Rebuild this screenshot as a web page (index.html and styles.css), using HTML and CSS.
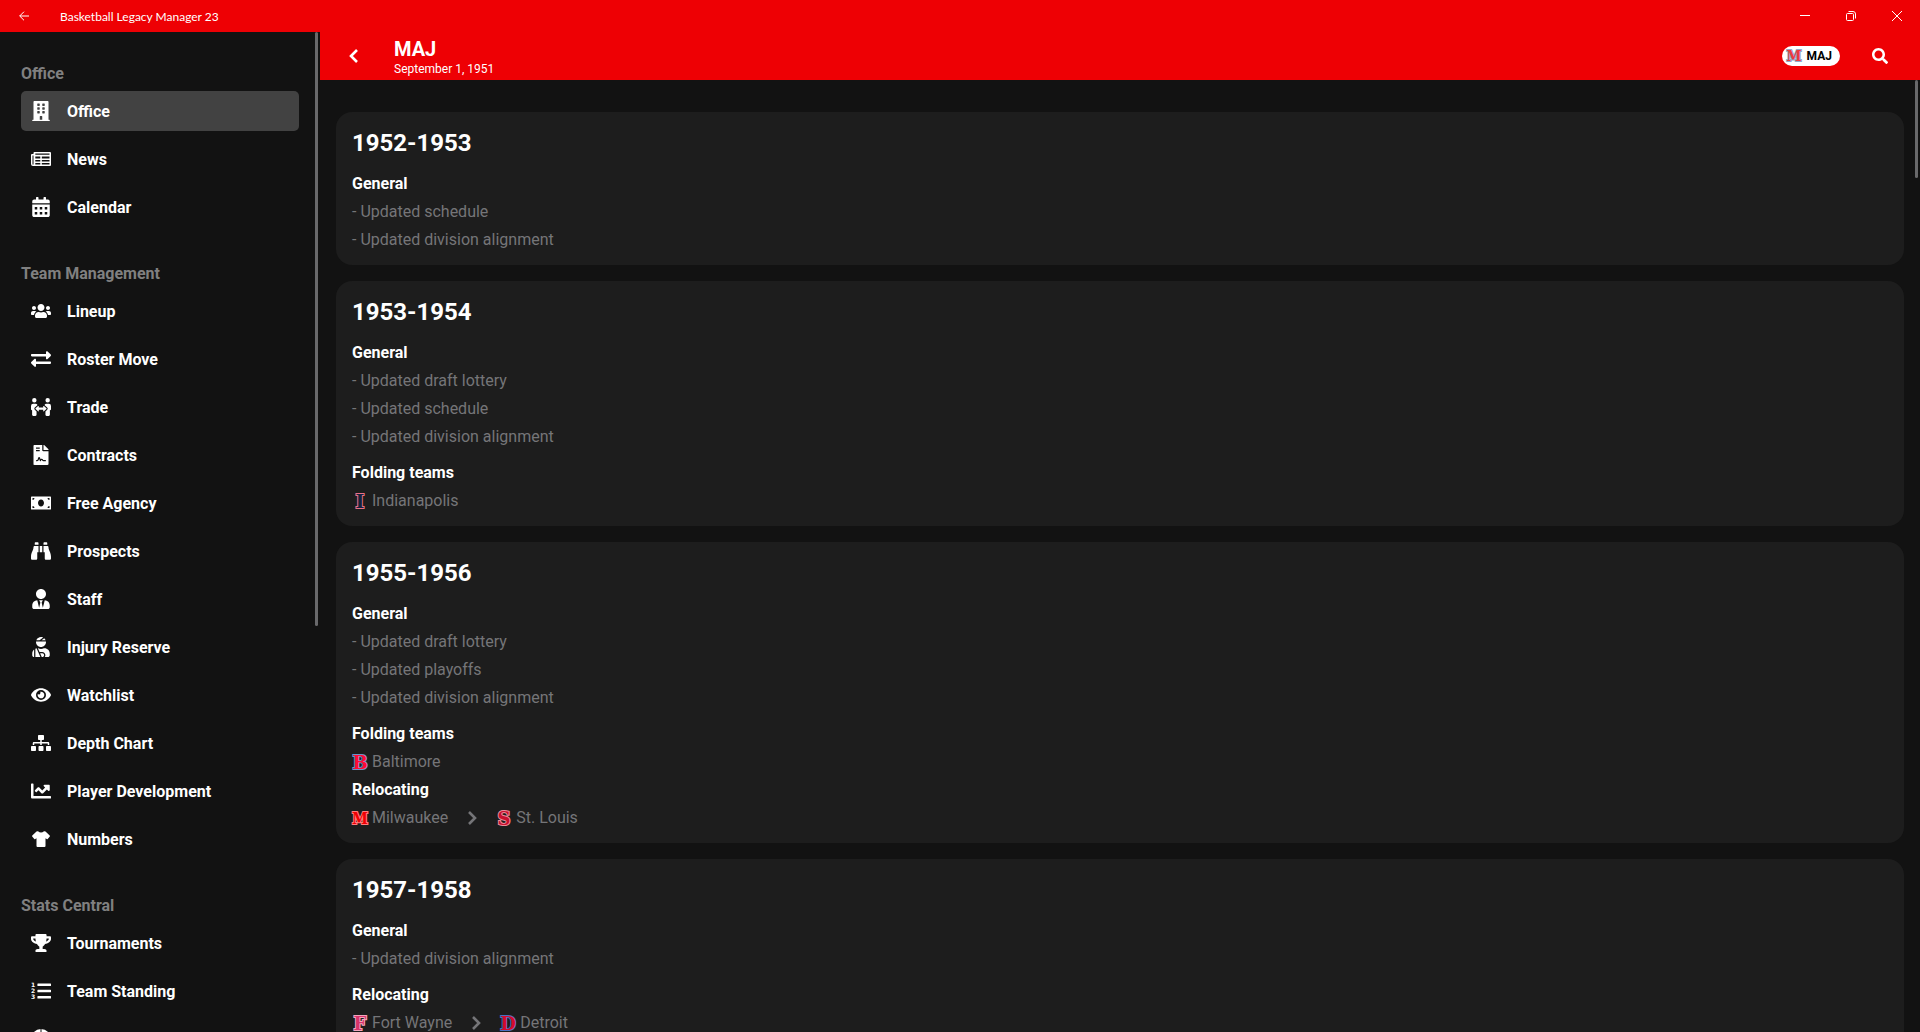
FILE: index.html
```html
<!DOCTYPE html>
<html lang="en">
<head>
    <meta charset="UTF-8">
    <meta name="viewport" content="width=device-width, initial-scale=1.0">
    <title>Basketball Legacy Manager 23</title>
    <link rel="stylesheet" href="styles.css">
</head>
<body>
    <div class="titlebar">
        <button class="titlebar-back" aria-label="Back">
            <svg width="10" height="10" viewBox="0 0 10 10"><path d="M10 5H.7M5 .7.7 5 5 9.300"/></svg>
        </button>
        <span class="titlebar-name">Basketball Legacy Manager 23</span>
        <button class="window-button" aria-label="Minimize">
            <svg width="10" height="10" viewBox="0 0 10 10"><path d="M0 4.500h10"/></svg>
        </button>
        <button class="window-button" aria-label="Restore">
            <svg width="10" height="10" viewBox="0 0 10 10"><path d="M1.500 2.500h5a1 1 0 0 1 1 1v5a1 1 0 0 1-1 1h-5a1 1 0 0 1-1-1v-5a1 1 0 0 1 1-1zM2.500.5H7A2.500 2.500 0 0 1 9.500 3v4.500"/></svg>
        </button>
        <button class="window-button" aria-label="Close">
            <svg width="10" height="10" viewBox="0 0 10 10"><path d="M0 0l10 10M10 0 0 10"/></svg>
        </button>
    </div>
    <div class="app">
        <div class="sidebar">
            <nav class="menu">
                <section>
                    <h2>Office</h2>
                    <a class="active" href="#office">
                        <svg viewBox="0 0 448 512"><path d="M436 480h-20V24c0-13.255-10.745-24-24-24H56C42.745 0 32 10.745 32 24v456H12c-6.627 0-12 5.373-12 12v20h448v-20c0-6.627-5.373-12-12-12zM128 76c0-6.627 5.373-12 12-12h40c6.627 0 12 5.373 12 12v40c0 6.627-5.373 12-12 12h-40c-6.627 0-12-5.373-12-12V76zm0 96c0-6.627 5.373-12 12-12h40c6.627 0 12 5.373 12 12v40c0 6.627-5.373 12-12 12h-40c-6.627 0-12-5.373-12-12v-40zm52 148h-40c-6.627 0-12-5.373-12-12v-40c0-6.627 5.373-12 12-12h40c6.627 0 12 5.373 12 12v40c0 6.627-5.373 12-12 12zm76 160h-64v-84c0-6.627 5.373-12 12-12h40c6.627 0 12 5.373 12 12v84zm64-172c0 6.627-5.373 12-12 12h-40c-6.627 0-12-5.373-12-12v-40c0-6.627 5.373-12 12-12h40c6.627 0 12 5.373 12 12v40zm0-96c0 6.627-5.373 12-12 12h-40c-6.627 0-12-5.373-12-12v-40c0-6.627 5.373-12 12-12h40c6.627 0 12 5.373 12 12v40zm0-96c0 6.627-5.373 12-12 12h-40c-6.627 0-12-5.373-12-12V76c0-6.627 5.373-12 12-12h40c6.627 0 12 5.373 12 12v40z"/></svg>
                        Office
                    </a>
                    <a href="#news">
                        <svg viewBox="0 0 20 20"><path fill-rule="evenodd" d="M3.500 3h15.500q1 0 1 1v12q0 1-1 1H2q-2 0-2-2V6q0-1 1-1h1.500V4q0-1 1-1zM1.500 6.500V15q0 .7.500.7t.5-.7V6.500zM4.300 4.600v1.200h14.200V4.600zM4.300 7.600v1.800h5V7.600zM10.800 7.600v1.800h7.700V7.600zM4.300 11v1.400h5V11zM10.800 11v1.400h7.700V11zM4.300 14v1.400h5V14zM10.800 14v1.400h7.700V14z"/></svg>
                        News
                    </a>
                    <a href="#calendar">
                        <svg viewBox="0 0 448 512"><path fill-rule="evenodd" d="M0 464c0 26.500 21.500 48 48 48h352c26.500 0 48-21.500 48-48V192H0v272zM64 256h64v64H64zm128 0h64v64h-64zm128 0h64v64h-64zM64 384h64v64H64zm128 0h64v64h-64zm128 0h64v64h-64zM400 64h-48V16c0-8.800-7.200-16-16-16h-32c-8.800 0-16 7.200-16 16v48H160V16c0-8.800-7.200-16-16-16h-32c-8.800 0-16 7.200-16 16v48H48C21.500 64 0 85.500 0 112v48h448v-48c0-26.500-21.500-48-48-48z"/></svg>
                        Calendar
                    </a>
                </section>
                <section>
                    <h2>Team Management</h2>
                    <a href="#lineup">
                        <svg viewBox="0 0 640 512"><path d="M96 224c35.300 0 64-28.700 64-64s-28.700-64-64-64-64 28.700-64 64 28.700 64 64 64zm448 0c35.300 0 64-28.700 64-64s-28.700-64-64-64-64 28.700-64 64 28.700 64 64 64zm32 32h-64c-17.600 0-33.500 7.100-45.100 18.600 40.300 22.100 68.900 62 75.100 109.400h66c17.700 0 32-14.300 32-32v-32c0-35.300-28.700-64-64-64zm-256 0c61.900 0 112-50.100 112-112S381.900 32 320 32 208 82.100 208 144s50.100 112 112 112zm76.800 32h-8.300c-20.800 10-43.900 16-68.500 16s-47.600-6-68.500-16h-8.300C179.600 288 128 339.600 128 403.200V432c0 26.500 21.500 48 48 48h288c26.500 0 48-21.500 48-48v-28.800c0-63.600-51.600-115.200-115.200-115.200zm-223.700-13.400C161.500 263.100 145.600 256 128 256H64c-35.300 0-64 28.700-64 64v32c0 17.700 14.300 32 32 32h65.900c6.300-47.400 34.900-87.300 75.200-109.400z"/></svg>
                        Lineup
                    </a>
                    <a href="#roster-move">
                        <svg viewBox="0 0 512 512"><path d="M0 168v-16c0-13.255 10.745-24 24-24h360V80c0-21.367 25.899-32.042 40.971-16.971l80 80c9.372 9.373 9.372 24.569 0 33.941l-80 80C409.956 271.982 384 261.456 384 240v-48H24c-13.255 0-24-10.745-24-24zm488 152H128v-48c0-21.314-25.862-32.080-40.971-16.971l-80 80c-9.372 9.373-9.372 24.569 0 33.941l80 80C102.057 463.997 128 453.437 128 432v-48h360c13.255 0 24-10.745 24-24v-16c0-13.255-10.745-24-24-24z"/></svg>
                        Roster Move
                    </a>
                    <a href="#trade">
                        <svg viewBox="0 0 576 512"><path d="M96,128A64,64,0,1,0,32,64,64,64,0,0,0,96,128Zm0,176.080a44.110,44.110,0,0,1,13.640-32L181.770,204c1.650-1.550,3.770-2.310,5.610-3.570A63.910,63.910,0,0,0,128,160H64A64,64,0,0,0,0,224v96a32,32,0,0,0,32,32V480a32,32,0,0,0,32,32h64a32,32,0,0,0,32-32V383.610l-50.360-47.530A44.080,44.080,0,0,1,96,304.080ZM480,128a64,64,0,1,0-64-64A64,64,0,0,0,480,128Zm32,32H448a63.910,63.910,0,0,0-59.380,40.420c1.840,1.270,4,2,5.620,3.590l72.120,68.060a44.370,44.370,0,0,1,0,64L416,383.620V480a32,32,0,0,0,32,32h64a32,32,0,0,0,32-32V352a32,32,0,0,0,32-32V224A64,64,0,0,0,512,160ZM444.400,295.340l-72.120-68.060A12,12,0,0,0,352,236v36H224V236a12,12,0,0,0-20.280-8.730L131.600,295.340a12.400,12.400,0,0,0,0,17.470l72.120,68.070A12,12,0,0,0,224,372.140V336H352v36.140a12,12,0,0,0,20.280,8.740l72.120-68.070A12.400,12.400,0,0,0,444.400,295.340Z"/></svg>
                        Trade
                    </a>
                    <a href="#contracts">
                        <svg viewBox="0 0 384 512"><path d="M224 136V0H24C10.700 0 0 10.700 0 24v464c0 13.300 10.700 24 24 24h336c13.300 0 24-10.700 24-24V160H248c-13.200 0-24-10.800-24-24zM64 72c0-4.420 3.580-8 8-8h80c4.420 0 8 3.580 8 8v16c0 4.420-3.580 8-8 8H72c-4.420 0-8-3.580-8-8V72zm0 64c0-4.420 3.580-8 8-8h80c4.420 0 8 3.580 8 8v16c0 4.420-3.580 8-8 8H72c-4.420 0-8-3.580-8-8v-16zm192.810 248H304c8.840 0 16 7.160 16 16s-7.160 16-16 16h-47.190c-16.450 0-31.270-9.140-38.640-23.860-2.950-5.920-8.090-6.520-10.170-6.520s-7.220.59-10.020 6.190l-7.670 15.340a15.986 15.986 0 0 1-14.310 8.840c-.38 0-.75-.02-1.140-.05-6.450-.45-12-4.750-14.030-10.890L144 354.590l-10.610 31.880c-5.890 17.660-22.380 29.530-41 29.530H80c-8.840 0-16-7.160-16-16s7.160-16 16-16h12.390c4.830 0 9.110-3.080 10.640-7.660l18.190-54.640c3.300-9.810 12.440-16.410 22.780-16.410s19.480 6.590 22.770 16.410l13.880 41.640c19.770-16.190 54.050-9.700 66 14.160 2.020 4.060 5.960 6.500 10.160 6.500zM377 105L279.100 7c-4.500-4.500-10.600-7-17-7H256v128h128v-6.100c0-6.300-2.500-12.400-7-16.900z"/></svg>
                        Contracts
                    </a>
                    <a href="#free-agency">
                        <svg viewBox="0 0 640 512"><path fill-rule="evenodd" d="M20 48h600a20 20 0 0 1 20 20v376a20 20 0 0 1-20 20H20a20 20 0 0 1-20-20V68a20 20 0 0 1 20-20zM48 96v64a64 64 0 0 0 64-64zM528 96a64 64 0 0 0 64 64V96zM48 352v64h64a64 64 0 0 0-64-64zM592 352a64 64 0 0 0-64 64h64zM320 144c-53 0-96 50-96 112s43 112 96 112 96-50 96-112-43-112-96-112z"/></svg>
                        Free Agency
                    </a>
                    <a href="#prospects">
                        <svg viewBox="0 0 512 512"><path d="M416 48c0-8.840-7.160-16-16-16h-64c-8.840 0-16 7.160-16 16v48h96V48zM63.910 159.990C61.400 253.840 3.460 274.220 0 404v44c0 17.670 14.330 32 32 32h96c17.670 0 32-14.330 32-32V288h32V128H95.840c-17.630 0-31.450 14.370-31.930 31.990zm384.180 0c-.48-17.620-14.300-31.990-31.930-31.990H320v160h32v160c0 17.670 14.330 32 32 32h96c17.670 0 32-14.330 32-32v-44c-3.460-129.780-61.400-150.160-63.910-244.010zM176 32h-64c-8.840 0-16 7.160-16 16v48h96V48c0-8.840-7.160-16-16-16zm48 256h64V128h-64v160z"/></svg>
                        Prospects
                    </a>
                    <a href="#staff">
                        <svg viewBox="0 0 448 512"><path d="M224 256c70.700 0 128-57.300 128-128S294.700 0 224 0 96 57.300 96 128s57.300 128 128 128zm95.800 32.600L272 480l-32-136 32-56h-96l32 56-32 136-47.800-191.400C56.900 292 0 350.300 0 422.400V464c0 26.500 21.500 48 48 48h352c26.500 0 48-21.500 48-48v-41.600c0-72.100-56.900-130.400-128.200-133.800z"/></svg>
                        Staff
                    </a>
                    <a href="#injury-reserve">
                        <svg viewBox="0 0 448 512"><path d="M277.370 11.980C261.080 4.470 243.110 0 224 0c-53.690 0-99.500 33.130-118.510 80h81.190l90.690-68.020zM342.510 80c-7.900-19.470-20.670-36.200-36.490-49.520L239.990 80h102.520zM224 256c70.690 0 128-57.310 128-128 0-5.480-.95-10.700-1.610-16H97.610c-.67 5.300-1.610 10.520-1.610 16 0 70.690 57.310 128 128 128zM80 299.700V512h128.260l-98.450-221.520A132.835 132.835 0 0 0 80 299.700zM0 464c0 26.510 21.490 48 48 48V320.240C18.880 344.890 0 381.260 0 422.400V464zm256-48h-55.380l42.670 96H256c26.470 0 48-21.530 48-48s-21.530-48-48-48zm57.600-128h-16.710c-22.240 10.180-46.880 16-72.890 16s-50.650-5.820-72.890-16h-7.370l42.670 96H256c44.110 0 80 35.890 80 80 0 18.080-6.260 34.590-16.410 48H400c26.510 0 48-21.490 48-48v-41.600c0-74.230-60.170-134.400-134.400-134.400z"/></svg>
                        Injury Reserve
                    </a>
                    <a href="#watchlist">
                        <svg viewBox="0 0 576 512"><path d="M572.520 241.400C518.290 135.590 410.930 64 288 64S57.680 135.640 3.480 241.410a32.350 32.350 0 0 0 0 29.190C57.710 376.410 165.070 448 288 448s230.320-71.640 284.520-177.410a32.350 32.350 0 0 0 0-29.190zM288 400a144 144 0 1 1 144-144 143.930 143.930 0 0 1-144 144zm0-240a95.310 95.310 0 0 0-25.310 3.790 47.850 47.850 0 0 1-66.900 66.900A95.780 95.780 0 1 0 288 160z"/></svg>
                        Watchlist
                    </a>
                    <a href="#depth-chart">
                        <svg viewBox="0 0 640 512"><path d="M128 352H32c-17.670 0-32 14.330-32 32v96c0 17.670 14.330 32 32 32h96c17.670 0 32-14.330 32-32v-96c0-17.670-14.330-32-32-32zm-24-80h192v48h48v-48h192v48h48v-57.590c0-21.170-17.230-38.410-38.410-38.410H344v-64h40c17.670 0 32-14.330 32-32V32c0-17.670-14.330-32-32-32H256c-17.670 0-32 14.330-32 32v96c0 17.670 14.330 32 32 32h40v64H94.410C73.230 224 56 241.230 56 262.410V320h48v-48zm264 80h-96c-17.670 0-32 14.330-32 32v96c0 17.670 14.330 32 32 32h96c17.670 0 32-14.330 32-32v-96c0-17.670-14.330-32-32-32zm240 0h-96c-17.670 0-32 14.330-32 32v96c0 17.670 14.330 32 32 32h96c17.670 0 32-14.330 32-32v-96c0-17.670-14.330-32-32-32z"/></svg>
                        Depth Chart
                    </a>
                    <a href="#player-development">
                        <svg viewBox="0 0 512 512"><path d="M496 384H64V80c0-8.840-7.160-16-16-16H16C7.160 64 0 71.160 0 80v336c0 17.670 14.330 32 32 32h464c8.840 0 16-7.160 16-16v-32c0-8.840-7.160-16-16-16zM464 96H345.940c-21.380 0-32.090 25.850-16.970 40.970l32.400 32.400L288 242.750l-73.370-73.370c-12.500-12.500-32.760-12.500-45.250 0l-68.690 68.690c-6.250 6.250-6.250 16.380 0 22.630l22.620 22.620c6.250 6.250 16.380 6.250 22.630 0L192 237.250l73.370 73.370c12.500 12.500 32.760 12.500 45.250 0l96-96 32.400 32.400c15.120 15.120 40.970 4.410 40.970-16.970V112c.01-8.840-7.150-16-15.990-16z"/></svg>
                        Player Development
                    </a>
                    <a href="#numbers">
                        <svg viewBox="0 0 20 20"><path d="M7 2.300q3 2.400 6 0 .8-.3 1.500.3L18.700 6.500q.5.500.1 1.100L16.700 10q-.5.500-1 .1l-1.200-.8V17q0 1-1 1h-7q-1 0-1-1V9.300l-1.200.8q-.5.400-1-.1L1.200 7.600q-.4-.6.100-1.100L5.500 2.600q.7-.6 1.500-.3z"/></svg>
                        Numbers
                    </a>
                </section>
                <section>
                    <h2>Stats Central</h2>
                    <a href="#tournaments">
                        <svg viewBox="0 0 576 512"><path d="M552 64H448V24c0-13.300-10.700-24-24-24H152c-13.300 0-24 10.700-24 24v40H24C10.700 64 0 74.700 0 88v56c0 35.700 22.500 72.400 61.900 100.700 31.500 22.700 69.800 37.100 110 41.700C203.300 338.500 240 360 240 360v72h-48c-35.300 0-64 20.700-64 56v12c0 6.600 5.400 12 12 12h296c6.600 0 12-5.400 12-12v-12c0-35.300-28.700-56-64-56h-48v-72s36.700-21.500 68.100-73.600c40.300-4.600 78.600-19 110-41.700 39.300-28.300 61.900-65 61.900-100.700V88c0-13.300-10.700-24-24-24zM99.300 192.800C74.900 175.200 64 155.600 64 144v-16h64.200c1 32.600 5.800 61.200 12.800 86.200-15.100-5.200-29.200-12.400-41.700-21.400zM512 144c0 16.100-17.700 36.100-35.300 48.800-12.500 9-26.700 16.200-41.800 21.400 7-25 11.800-53.600 12.800-86.200H512v16z"/></svg>
                        Tournaments
                    </a>
                    <a href="#team-standing">
                        <svg class="list-icon" viewBox="0 0 20 20">
                            <path d="M6.900 2.500h12.600q.5 0 .5.500v1.500q0 .5-.5.500H6.900q-.5 0-.5-.5V3q0-.5.5-.5zm0 6.250h12.600q.5 0 .5.500v1.500q0 .5-.5.500H6.900q-.5 0-.5-.5v-1.500q0-.5.5-.5zM6.900 15h12.600q.5 0 .5.500V17q0 .5-.5.500H6.900q-.5 0-.5-.5v-1.500q0-.5.5-.5z"/>
                            <text x="0" y="6">1</text>
                            <text x="0" y="12">2</text>
                            <text x="0" y="18">3</text>
                        </svg>
                        Team Standing
                    </a>
                    <a href="#basketball" aria-label="Basketball">
                        <svg class="ball-icon" viewBox="0 0 20 20"><circle cx="10" cy="10" r="10"/><path d="M10 0v20M0 10h20M3 3q5 7 0 14M17 3q-5 7 0 14"/></svg>
                    </a>
                </section>
            </nav>
            <div class="scroll-thumb menu-thumb"></div>
        </div>
        <div class="page">
            <header>
                <button class="icon-button" aria-label="Previous page">
                    <svg width="16" height="16" viewBox="0 0 16 16"><path class="chevron" d="M11 2 5 8l6 6"/></svg>
                </button>
                <div class="heading">
                    <h1>MAJ</h1>
                    <p>September 1, 1951</p>
                </div>
                <button class="team-pill">
                    <svg class="logo maj" viewBox="0 0 16 16"><text x="8" y="13">M</text></svg>
                    MAJ
                </button>
                <button class="icon-button" aria-label="Search">
                    <svg width="16" height="16" viewBox="0 0 512 512"><path d="M505 442.700L405.300 343c-4.500-4.500-10.600-7-17-7H372c27.600-35.300 44-79.700 44-128C416 93.100 322.900 0 208 0S0 93.100 0 208s93.100 208 208 208c48.300 0 92.700-16.400 128-44v16.300c0 6.400 2.500 12.500 7 17l99.700 99.700c9.400 9.400 24.600 9.400 33.900 0l28.300-28.300c9.400-9.400 9.400-24.600.1-34zM208 336c-70.700 0-128-57.200-128-128 0-70.700 57.200-128 128-128 70.700 0 128 57.200 128 128 0 70.700-57.200 128-128 128z"/></svg>
                </button>
            </header>
            <main>
                <article class="card">
                    <h2>1952-1953</h2>
                    <section>
                        <h3>General</h3>
                        <p>- Updated schedule</p>
                        <p>- Updated division alignment</p>
                    </section>
                </article>
                <article class="card">
                    <h2>1953-1954</h2>
                    <section>
                        <h3>General</h3>
                        <p>- Updated draft lottery</p>
                        <p>- Updated schedule</p>
                        <p>- Updated division alignment</p>
                    </section>
                    <section>
                        <h3>Folding teams</h3>
                        <div class="team"><svg class="logo indianapolis" viewBox="0 0 16 16"><text x="8" y="15">I</text></svg>Indianapolis</div>
                    </section>
                </article>
                <article class="card">
                    <h2>1955-1956</h2>
                    <section>
                        <h3>General</h3>
                        <p>- Updated draft lottery</p>
                        <p>- Updated playoffs</p>
                        <p>- Updated division alignment</p>
                    </section>
                    <section>
                        <h3>Folding teams</h3>
                        <div class="team"><svg class="logo baltimore" viewBox="0 0 16 16"><text x="8" y="15">B</text></svg>Baltimore</div>
                        <h3>Relocating</h3>
                        <div class="move">
                            <div class="team"><svg class="logo milwaukee" viewBox="0 0 16 16"><text x="8" y="14">M</text></svg>Milwaukee</div>
                            <svg width="18" height="18" viewBox="0 0 18 18"><path class="chevron" d="m6 3 6 6-6 6"/></svg>
                            <div class="team"><svg class="logo st-louis" viewBox="0 0 16 16"><text x="8" y="15">S</text></svg>St. Louis</div>
                        </div>
                    </section>
                </article>
                <article class="card">
                    <h2>1957-1958</h2>
                    <section>
                        <h3>General</h3>
                        <p>- Updated division alignment</p>
                    </section>
                    <section>
                        <h3>Relocating</h3>
                        <div class="move">
                            <div class="team"><svg class="logo fort-wayne" viewBox="0 0 16 16"><text x="8" y="15">F</text></svg>Fort Wayne</div>
                            <svg width="18" height="18" viewBox="0 0 18 18"><path class="chevron" d="m6 3 6 6-6 6"/></svg>
                            <div class="team"><svg class="logo detroit" viewBox="0 0 16 16"><text x="8" y="15">D</text></svg>Detroit</div>
                        </div>
                    </section>
                </article>
                <div class="scroll-thumb page-thumb"></div>
            </main>
        </div>
    </div>
</body>
</html>
```
FILE: styles.css
```css
* {
    box-sizing: border-box;
}
body {
    display: flex;
    flex-direction: column;
    height: 100vh;
    margin: 0;
    overflow: hidden;
    background: #121212;
    color: #fff;
    font-family: Roboto, sans-serif;
    font-size: 16px;
}
h1, h2, h3, p {
    margin: 0;
}
button {
    padding: 0;
    border: 0;
    background: none;
    color: inherit;
    font-family: inherit;
    cursor: pointer;
}
svg {
    display: block;
    flex: none;
    fill: currentColor;
}
.chevron {
    fill: none;
    stroke: currentColor;
    stroke-width: 2.6;
}

/* window title bar */
.titlebar {
    display: flex;
    flex: none;
    height: 32px;
    align-items: center;
    background: #ee0004;
    font-family: Lato, "Noto Sans", sans-serif;
    font-size: 12px;
}
.titlebar svg {
    margin: auto;
    overflow: visible;
    fill: none;
    stroke: #fff;
}
.titlebar-back {
    width: 48px;
    height: 32px;
}
.titlebar-name {
    flex: 1;
    padding-left: 12px;
}
.window-button {
    width: 46px;
    height: 32px;
}

.app {
    display: flex;
    flex: 1;
    min-height: 0;
}

/* side menu */
.sidebar {
    position: relative;
    flex: none;
    width: 320px;
    overflow: hidden;
}
.menu {
    display: flex;
    flex-direction: column;
    gap: 36px;
    padding: 31px 21px;
}
.menu section {
    display: flex;
    flex-direction: column;
    gap: 8px;
}
.menu h2 {
    padding-top: 2px;
    color: #808080;
    font-size: 16px;
    line-height: 18px;
}
.menu a {
    display: flex;
    align-items: center;
    gap: 16px;
    height: 40px;
    padding: 0 10px;
    border-radius: 5px;
    color: #fff;
    font-weight: bold;
    text-decoration: none;
}
.menu a.active {
    background: #424242;
}
.menu svg {
    width: 20px;
    height: 20px;
}
.list-icon text {
    font: bold 6px "DejaVu Sans", sans-serif;
}
.ball-icon path {
    fill: none;
    stroke: #121212;
}
.scroll-thumb {
    position: absolute;
    top: 0;
    right: 2px;
    width: 3px;
    border-radius: 2px;
    background: #69696b;
}
.menu-thumb {
    height: 59.4%;
}
.page-thumb {
    height: 10.3%;
}

/* page header */
.page {
    display: flex;
    flex: 1;
    flex-direction: column;
    min-width: 0;
}
header {
    display: flex;
    flex: none;
    align-items: center;
    height: 48px;
    padding: 0 20px 0 14px;
    background: #ee0004;
}
.icon-button {
    display: flex;
    align-items: center;
    justify-content: center;
    width: 40px;
    height: 40px;
}
.heading {
    flex: 1;
    padding: 2px 0 0 20px;
}
.heading h1 {
    font-size: 20px;
    line-height: 24px;
}
.heading p {
    font-size: 12px;
    line-height: 16px;
}
.team-pill {
    display: flex;
    align-items: center;
    gap: 5px;
    height: 20px;
    margin-right: 20px;
    padding: 0 8px 0 4px;
    border-radius: 10px;
    background: #fff;
    color: #000;
    font-size: 12px;
    font-weight: bold;
}

/* season list */
main {
    position: relative;
    display: flex;
    flex: 1;
    flex-direction: column;
    gap: 16px;
    min-height: 0;
    padding: 32px 16px 16px;
    overflow: hidden;
}
.card {
    flex: none;
    padding: 12px 16px 11px;
    border-radius: 16px;
    background: #1d1d1d;
    color: #757578;
    line-height: 28px;
}
.card h2 {
    margin-bottom: 8px;
    color: #fff;
    font-size: 24px;
    line-height: 38px;
}
.card section + section {
    margin-top: 8px;
}
.card h3 {
    color: #fff;
    font-size: 16px;
}
.team {
    display: flex;
    align-items: center;
    gap: 4px;
}
.move {
    display: flex;
    align-items: center;
    gap: 15px;
}

/* team logos */
.logo {
    width: 16px;
    height: 16px;
    overflow: visible;
}
.logo text {
    font: bold 18px "DejaVu Serif", serif;
    text-anchor: middle;
    paint-order: stroke;
    stroke-width: 2px;
}
.logo.indianapolis text {
    font-size: 19px;
    fill: #14233c;
    stroke: #e87088;
}
.logo.baltimore text {
    fill: #ff0a36;
    stroke: #6b93c9;
}
.logo.milwaukee text,
.logo.maj text {
    font-family: "DejaVu Serif Condensed", "DejaVu Serif", serif;
    font-size: 16px;
    fill: #ee0004;
    stroke: #ff7a7c;
}
.logo.maj text {
    font-size: 15px;
    fill: #ee3a3e;
    stroke: #91a9cc;
}
.logo.st-louis text {
    fill: #c8102e;
    stroke: #ee8a9a;
}
.logo.fort-wayne text {
    fill: #d6336c;
    stroke: #f3a6bd;
}
.logo.detroit text {
    fill: #d50a2c;
    stroke: #4a6fc0;
}
```
